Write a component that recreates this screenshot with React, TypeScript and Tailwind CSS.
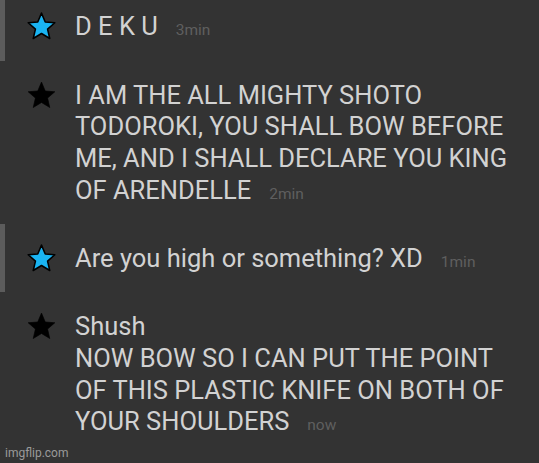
import React from "react";

type Msg = {
  lines: string[];
  time: string;
  mine: boolean;
  pad: string;
};

const messages: Msg[] = [
  { lines: ["D E K U"], time: "3min", mine: true, pad: "pt-[11px] pb-[18px]" },
  {
    lines: [
      "I AM THE ALL MIGHTY SHOTO",
      "TODOROKI, YOU SHALL BOW BEFORE",
      "ME, AND I SHALL DECLARE YOU KING",
      "OF ARENDELLE",
    ],
    time: "2min",
    mine: false,
    pad: "pt-[19px] pb-[17px]",
  },
  { lines: ["Are you high or something? XD"], time: "1min", mine: true, pad: "pt-[19px] pb-[18px]" },
  {
    lines: [
      "Shush",
      "NOW BOW SO I CAN PUT THE POINT",
      "OF THIS PLASTIC KNIFE ON BOTH OF",
      "YOUR SHOULDERS",
    ],
    time: "now",
    mine: false,
    pad: "pt-[19px] pb-[25px]",
  },
];

function Star({ blue }: { blue: boolean }) {
  return (
    <svg width="31" height="30" viewBox="0 0 24 23">
      <path
        d="M12 1.5l2.9 6.9 7.4.6-5.6 4.9 1.7 7.3L12 17.3l-6.4 3.9 1.7-7.3L1.7 9l7.4-.6z"
        fill={blue ? "#1ab4f2" : "#000"}
        stroke="#000"
        strokeWidth={blue ? 1.2 : 0.5}
        strokeLinejoin="round"
      />
    </svg>
  );
}

export default function App() {
  return (
    <div
      className="w-[539px] h-[463px] bg-[#333333] relative overflow-hidden"
      style={{ fontFamily: "Roboto, 'Liberation Sans', sans-serif" }}
    >
      {messages.map((m, i) => (
        <div key={i} className="flex">
          <div className={`w-[5px] shrink-0 ${m.mine ? "bg-[#5c5c5c]" : ""}`} />
          <div className={`flex ${m.pad}`}>
            <div className="w-[70px] shrink-0 flex justify-start pl-[21px] pt-[0px]">
              <Star blue={m.mine} />
            </div>
            <div className="text-[25.5px] leading-[31.7px] text-[#d2d2d2]">
              {m.lines.map((l, j) => (
                <div key={j}>
                  {l}
                  {j === m.lines.length - 1 && (
                    <span className="ml-[18px] text-[15.5px] leading-none text-[#5f5f5f]">
                      {m.time}
                    </span>
                  )}
                </div>
              ))}
            </div>
          </div>
        </div>
      ))}
      <div className="absolute left-[5px] bottom-[3px] text-[12px] leading-[14px] text-[#9a9a9a]">
        imgflip.com
      </div>
    </div>
  );
}
